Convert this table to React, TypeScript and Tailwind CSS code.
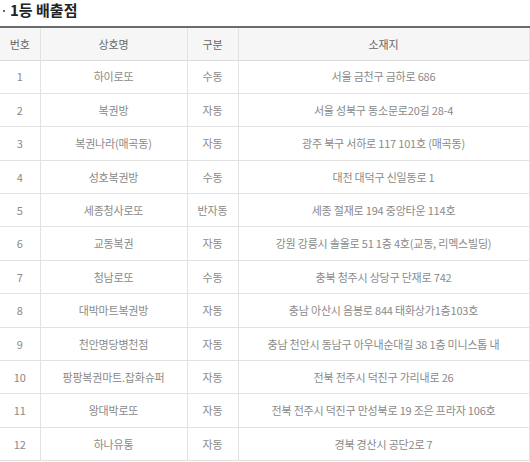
const rows: [string, string, string, string][] = [
  ["1", "하이로또", "수동", "서울 금천구 금하로 686"],
  ["2", "복권방", "자동", "서울 성북구 동소문로20길 28-4"],
  ["3", "복권나라(매곡동)", "자동", "광주 북구 서하로 117 101호 (매곡동)"],
  ["4", "성호복권방", "수동", "대전 대덕구 신일동로 1"],
  ["5", "세종청사로또", "반자동", "세종 절재로 194 중앙타운 114호"],
  ["6", "교동복권", "자동", "강원 강릉시 솔올로 51 1층 4호(교동, 리멕스빌딩)"],
  ["7", "청남로또", "수동", "충북 청주시 상당구 단재로 742"],
  ["8", "대박마트복권방", "자동", "충남 아산시 음봉로 844 태화상가1층103호"],
  ["9", "천안명당병천점", "자동", "충남 천안시 동남구 아우내순대길 38 1층 미니스톱 내"],
  ["10", "팡팡복권마트.잡화슈퍼", "자동", "전북 전주시 덕진구 가리내로 26"],
  ["11", "왕대박로또", "자동", "전북 전주시 덕진구 만성북로 19 조은 프라자 106호"],
  ["12", "하나유통", "자동", "경북 경산시 공단2로 7"],
];

export default function App() {
  return (
    <div className="w-[530px] h-[462px] overflow-hidden bg-white font-['Noto_Sans_CJK_KR','Noto_Sans',sans-serif]">
      <h3 className="flex items-center h-[19px] pl-[3px] text-[15px] font-bold text-[#222] leading-none">
        <span className="w-[2px] h-[2px] bg-[#666] mr-[5px] mt-[2px]" />
        1등 배출점
      </h3>

      <table className="mt-[7px] w-[529px] border-collapse table-fixed text-[11px] text-[#8a8a8a] text-center tracking-[-0.2px]">
        <colgroup>
          <col className="w-[40px]" />
          <col className="w-[147px]" />
          <col className="w-[51px]" />
          <col className="w-[291px]" />
        </colgroup>
        <thead>
          <tr className="h-[33px] bg-[#f6f6f6] border-t-2 border-t-[#6b6b6b] border-b border-b-[#dcdcdc]">
            <th className="font-normal text-[#666] border-r border-[#e2e2e2]">번호</th>
            <th className="font-normal text-[#666] border-r border-[#e2e2e2]">상호명</th>
            <th className="font-normal text-[#666] border-r border-[#e2e2e2]">구분</th>
            <th className="font-normal text-[#666] border-r border-[#e2e2e2]">소재지</th>
          </tr>
        </thead>
        <tbody>
          {rows.map(([no, name, kind, addr]) => (
            <tr key={no} className="h-[33.4px] border-b border-[#e2e2e2]">
              <td className="border-r border-[#e2e2e2]">{no}</td>
              <td className="border-r border-[#e2e2e2]">{name}</td>
              <td className="border-r border-[#e2e2e2]">{kind}</td>
              <td className="border-r border-[#e2e2e2]">{addr}</td>
            </tr>
          ))}
        </tbody>
      </table>
    </div>
  );
}
